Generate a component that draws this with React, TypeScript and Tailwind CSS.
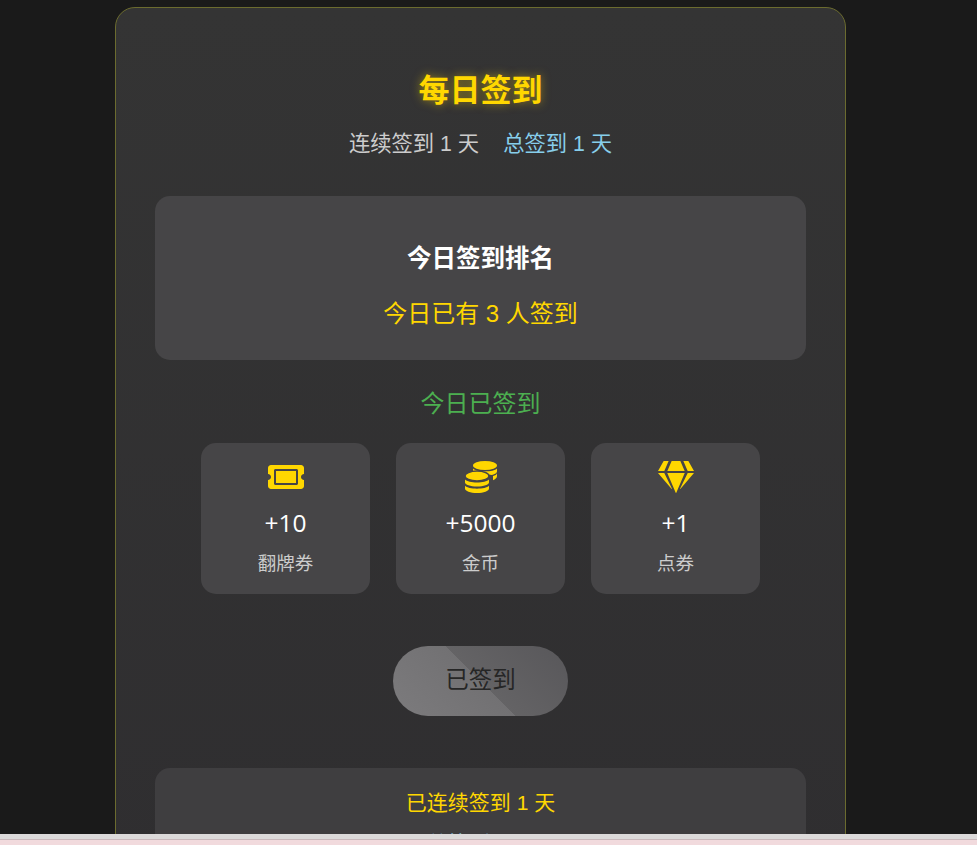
import { FaGem, FaTicketAlt } from 'react-icons/fa'

function CoinsIcon() {
  return (
    <svg viewBox="0 0 32 32" className="h-[32px] w-[32px]" fill="#ffd700">
      <ellipse cx="20" cy="4.500" rx="12" ry="4.500" />
      <path d="M8 7.500c2 2 6.500 2.800 12 2.800s10-.8 12-2.800v3c0 1.500-2 2.800-5 3.500-4-.5-15-1-19-3z" />
      <path d="M28 15c2-.5 4-1.500 4-3v3c0 2-2 3.500-4 4.200z" />
      <ellipse cx="12" cy="15" rx="12" ry="5" stroke="#464547" strokeWidth="1.500" />
      <path d="M0 18.500c2 2 6.500 3 12 3s10-1 12-3v3c0 2.200-5.400 4-12 4s-12-1.800-12-4z" />
      <path d="M0 24.800c2 2 6.500 2.900 12 2.900s10-.9 12-2.900v2.600c0 2.500-5.400 4.500-12 4.500s-12-2-12-4.500z" />
    </svg>
  )
}

const rewards = [
  { icon: <FaTicketAlt />, amount: '+10', label: '翻牌券' },
  { icon: <CoinsIcon />, amount: '+5000', label: '金币' },
  { icon: <FaGem />, amount: '+1', label: '点券' },
]

export default function App() {
  return (
    <div className="flex h-[845px] flex-col overflow-hidden bg-[#1a1a1a] font-['Liberation_Sans','Noto_Sans_CJK_SC',sans-serif]">
      <div className="h-[834px] w-[961px] overflow-hidden pt-[7px]">
        <div className="mx-auto w-[731px] rounded-t-[20px] border border-[#6b6b2f] bg-gradient-to-b from-[#343434] to-[#2f2e30] px-[39px] pt-[58px] text-center">
          <h1 className="text-[31px] leading-[50px] font-bold text-[#ffd700] [text-shadow:0_0_10px_rgba(255,215,0,0.5)]">每日签到</h1>
          <div className="mt-[13px] flex justify-center gap-6 text-[21.300px] leading-[30px]">
            <span className="text-[#cccccc]">连续签到 1 天</span>
            <span className="text-[#87ceeb]">总签到 1 天</span>
          </div>

          <div className="mt-[37px] flex h-[164px] flex-col items-center rounded-[15px] bg-[#464547] pt-[44px]">
            <h2 className="text-[24.500px] leading-[38px] font-bold text-white">今日签到排名</h2>
            <p className="mt-[17px] text-[24px] leading-[38px] text-[#ffd700]">今日已有 3 人签到</p>
          </div>

          <p className="mt-[25px] text-[24px] leading-[38px] text-[#4caf50]">今日已签到</p>

          <div className="mt-[20px] flex justify-center gap-[26px]">
            {rewards.map((reward) => (
              <div key={reward.label} className="flex h-[151px] w-[169px] flex-col items-center rounded-[15px] bg-[#464547] pt-[17px]">
                <div className="flex h-[34px] items-center text-[36px] text-[#ffd700]">{reward.icon}</div>
                <div className="mt-[11px] font-['Open_Sans',sans-serif] text-[24.500px] leading-[36px] text-white">{reward.amount}</div>
                <div className="mt-[9px] text-[18.500px] leading-[28px] text-[#cccccc]">{reward.label}</div>
              </div>
            ))}
          </div>

          <button type="button" className="mt-[52px] h-[70px] w-[175px] rounded-[35px] bg-[linear-gradient(45deg,#7c7b7d_0%,#727173_50%,#646365_50%,#58575a_100%)] text-[23.500px] text-[#262626]">
            已签到
          </button>

          <div className="mt-[52px] h-[120px] rounded-[15px] bg-[#3f3e40] pt-[16px]">
            <p className="text-[21px] leading-[38px] text-[#ffd700]">已连续签到 1 天</p>
            <p className="mt-[3px] text-[21px] leading-[38px] text-[#87ceeb]">总签到 1 天</p>
          </div>
        </div>
      </div>
      <div className="h-[5px] bg-[#dcdada]" />
      <div className="h-[6px] border-t border-[#c9b9bc] bg-[#f1dadd]" />
    </div>
  )
}
